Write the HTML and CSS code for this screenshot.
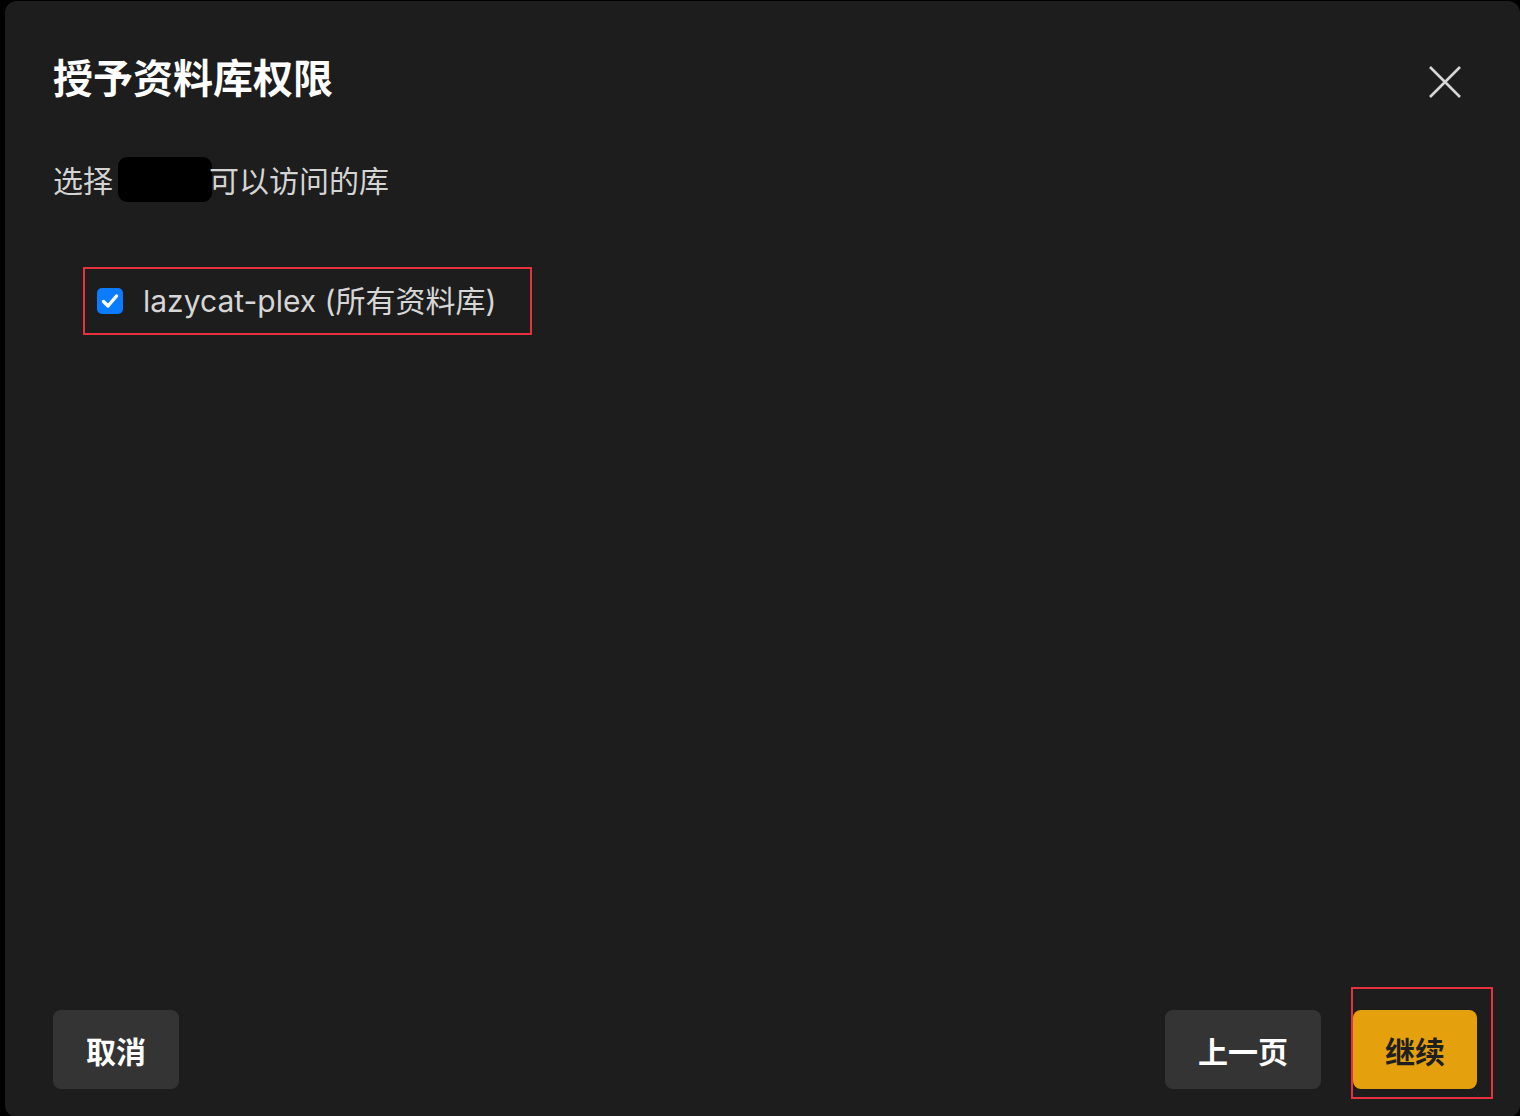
FILE: index.html
```html
<!DOCTYPE html>
<html lang="zh-CN">

<head>
    <meta charset="UTF-8" />
    <title>授予资料库权限</title>
    <link rel="stylesheet" href="styles.css">
</head>

<body>

    <div class="modal">
        <div class="modal-header">
            <h1 class="modal-title">授予资料库权限</h1>
            <button class="close-button" aria-label="关闭">
                <svg width="34" height="34" viewBox="0 0 34 34">
                    <path d="M2 2 L32 32 M32 2 L2 32" stroke="#d6d6d6" stroke-width="2.6" fill="none" />
                </svg>
            </button>
        </div>

        <div class="modal-body">
            <p class="subtitle">选择<span class="hidden-name"></span>可以访问的库</p>

            <!-- 资料库列表 -->
            <label class="library-row marked">
                <span class="checkbox">
                    <svg width="20" height="20" viewBox="0 0 20 20">
                        <path d="M3.5 10.5 L8 15 L16.5 5" stroke="#fff" stroke-width="3.4" fill="none"
                            stroke-linecap="round" stroke-linejoin="round" />
                    </svg>
                </span>
                <span class="library-name">lazycat-plex (所有资料库)</span>
            </label>
        </div>

        <div class="modal-footer">
            <button class="btn">取消</button>
            <div class="footer-right">
                <button class="btn">上一页</button>
                <div class="btn-wrap">
                    <button class="btn btn-primary">继续</button>
                    <span class="mark-box"></span>
                </div>
            </div>
        </div>
    </div>

</body>

</html>
```

FILE: styles.css
```css
html,
body {
    margin: 0;
    height: 100%;
    background-color: #000;
    overflow: hidden;
}

body {
    font-family: Inter, "Noto Sans CJK SC", sans-serif;
}

.modal {
    box-sizing: border-box;
    margin: 1px 0 0 5px;
    height: 1116px;
    background-color: #1d1d1d;
    border-radius: 12px;
    padding: 51px 43px 28px 48px;
    display: flex;
    flex-direction: column;
}

.modal-header {
    display: flex;
    justify-content: space-between;
    align-items: flex-start;
}

.modal-title {
    margin: 0;
    font-size: 40px;
    line-height: 48px;
    font-weight: bold;
    color: #fff;
    font-family: "Noto Sans CJK SC", sans-serif;
}

.close-button {
    background: none;
    border: none;
    padding: 0;
    margin: 13px 15px 0 0;
    cursor: pointer;
    display: flex;
}

.modal-body {
    flex: 1;
}

.subtitle {
    margin: 57px 0 0;
    display: flex;
    align-items: center;
    font-size: 30px;
    line-height: 45px;
    color: #d4d4d4;
    font-family: "Noto Sans CJK SC", sans-serif;
}

/* 用户名打码 */
.hidden-name {
    display: inline-block;
    width: 94px;
    height: 45px;
    background-color: #000;
    border-radius: 9px;
    margin: 0 -3px 0 5px;
}

.library-row {
    display: inline-flex;
    align-items: center;
    gap: 20px;
    margin: 65px 0 0 30px;
    padding: 0 34px 0 12px;
    height: 64px;
    cursor: pointer;
}

.marked {
    border: 2px solid #e5323e;
}

.checkbox {
    width: 26px;
    height: 26px;
    border-radius: 5px;
    background-color: #0b7bff;
    display: flex;
    align-items: center;
    justify-content: center;
}

.library-name {
    font-size: 30px;
    color: #d6d6d6;
    line-height: 40px;
}

.modal-footer {
    display: flex;
    justify-content: space-between;
    align-items: flex-end;
}

.footer-right {
    display: flex;
    gap: 32px;
}

.btn {
    height: 79px;
    padding: 0 33px;
    border: none;
    border-radius: 8px;
    background-color: #343434;
    color: #fff;
    font-family: "Noto Sans CJK SC", sans-serif;
    font-size: 30px;
    font-weight: bold;
    cursor: pointer;
}

.btn-primary {
    padding: 0 32px;
    background-color: #e5a00d;
    color: #1f1f1f;
}

.btn-wrap {
    position: relative;
    display: flex;
}

.mark-box {
    position: absolute;
    left: -2px;
    top: -23px;
    width: 138px;
    height: 108px;
    border: 2px solid #e5323e;
    pointer-events: none;
}
```
